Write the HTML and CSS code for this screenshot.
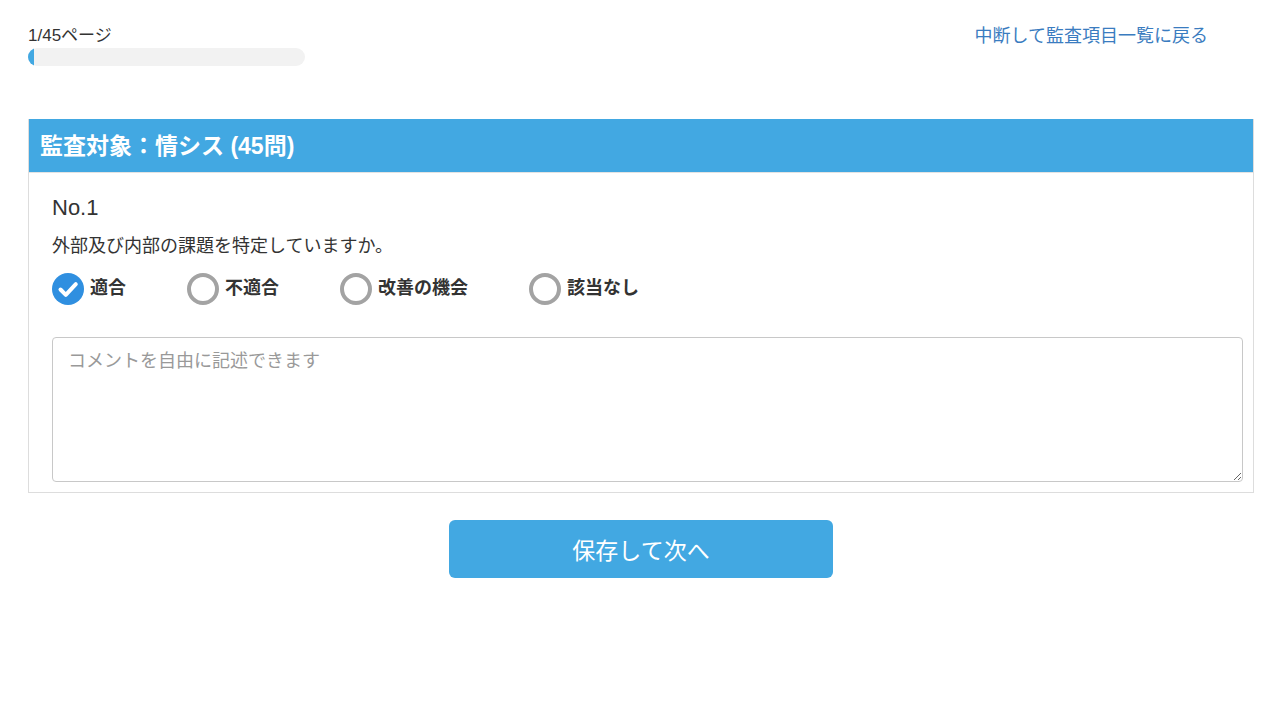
FILE: index.html
```html
<!DOCTYPE html>
<html lang="ja">
<head>
    <meta charset="UTF-8">
    <meta name="viewport" content="width=device-width, initial-scale=1.0">
    <title>監査チェック</title>
    <link rel="stylesheet" href="styles.css">
</head>
<body>
    <div class="container">
        <div class="top-bar">
            <div class="progress-area">
                <div class="progress-label">1/45ページ</div>
                <div class="progress">
                    <div class="progress-fill" style="width: 2%"></div>
                </div>
            </div>
            <a href="#" class="back-link">中断して監査項目一覧に戻る</a>
        </div>

        <div class="card">
            <div class="card-header">
                <h2>監査対象：情シス (45問)</h2>
            </div>
            <div class="card-body">
                <div class="question-no">No.1</div>
                <p class="question-text">外部及び内部の課題を特定していますか。</p>
                <div class="answers">
                    <label class="answer">
                        <input type="radio" name="answer1" value="ok" checked>
                        <span class="mark">
                            <svg viewBox="0 0 32 32" width="32" height="32">
                                <circle cx="16" cy="16" r="16" fill="#2f8fe0"/>
                                <path d="M8.5 16.5 L13.8 21.8 L23.8 11.2" fill="none" stroke="#fff" stroke-width="4" stroke-linecap="round" stroke-linejoin="round"/>
                            </svg>
                        </span>
                        <span class="answer-text">適合</span>
                    </label>
                    <label class="answer">
                        <input type="radio" name="answer1" value="ng">
                        <span class="mark ring"></span>
                        <span class="answer-text">不適合</span>
                    </label>
                    <label class="answer">
                        <input type="radio" name="answer1" value="chance">
                        <span class="mark ring"></span>
                        <span class="answer-text">改善の機会</span>
                    </label>
                    <label class="answer">
                        <input type="radio" name="answer1" value="na">
                        <span class="mark ring"></span>
                        <span class="answer-text">該当なし</span>
                    </label>
                </div>
                <textarea class="comment" placeholder="コメントを自由に記述できます"></textarea>
            </div>
        </div>

        <div class="actions">
            <button type="button" class="next-btn">保存して次へ</button>
        </div>
    </div>
</body>
</html>
```

FILE: styles.css
```css
body {
    margin: 0;
    padding: 0;
    background-color: #fff;
    color: #333;
    font-family: "Liberation Sans", "Noto Sans CJK JP", sans-serif;
}
.container {
    width: 1226px;
    margin: 0 0 0 28px;
}
.top-bar {
    display: flex;
    justify-content: space-between;
    align-items: flex-start;
    padding-top: 26px;
}
.progress-area {
    width: 277px;
}
.progress-label {
    font-size: 17px;
    line-height: 20px;
    color: #333;
}
.progress {
    height: 18px;
    margin-top: 2px;
    background-color: #f2f2f2;
    border-radius: 9px;
    overflow: hidden;
}
.progress-fill {
    height: 100%;
    background-color: #42a8e2;
}
.back-link {
    margin-right: 46px;
    font-size: 18px;
    line-height: 20px;
    color: #3a7cc0;
    text-decoration: none;
}
.card {
    margin-top: 53px;
    border: 1px solid #ddd;
    border-top: none;
}
.card-header {
    background-color: #42a8e2;
    border-bottom: 1px solid #e3e3e3;
    height: 54px;
    box-sizing: border-box;
    display: flex;
    align-items: center;
    padding: 0 0 4px 11px;
}
.card-header h2 {
    margin: 0;
    color: #fff;
    font-size: 23px;
    font-weight: bold;
}
.card-body {
    padding: 22px 10px 10px 23px;
}
.question-no {
    font-size: 22px;
    line-height: 26px;
    color: #333;
}
.question-text {
    margin: 13px 0 0;
    font-size: 18px;
    line-height: 24px;
    color: #333;
}
.answers {
    display: flex;
    margin-top: 15px;
}
.answer {
    display: flex;
    align-items: center;
    margin-right: 61px;
    cursor: pointer;
}
.answer input {
    display: none;
}
.mark {
    width: 32px;
    height: 32px;
    box-sizing: border-box;
    margin-right: 6px;
}
.mark svg {
    display: block;
}
.ring {
    border: 4px solid #a3a3a3;
    border-radius: 50%;
}
.answer-text {
    font-size: 18px;
    line-height: 24px;
    padding-bottom: 2px;
    font-weight: bold;
    color: #333;
}
.comment {
    display: block;
    width: 100%;
    height: 145px;
    margin-top: 32px;
    padding: 8px 15px;
    box-sizing: border-box;
    border: 1px solid #c8c8c8;
    border-radius: 4px;
    font-family: "Liberation Sans", "Noto Sans CJK JP", sans-serif;
    font-size: 18px;
    color: #333;
    resize: vertical;
}
.comment::placeholder {
    color: #999;
}
.actions {
    display: flex;
    justify-content: center;
    margin-top: 27px;
}
.next-btn {
    width: 384px;
    height: 58px;
    background-color: #42a8e2;
    color: #fff;
    border: none;
    border-radius: 6px;
    font-family: "Liberation Sans", "Noto Sans CJK JP", sans-serif;
    font-size: 23px;
    cursor: pointer;
}
```
